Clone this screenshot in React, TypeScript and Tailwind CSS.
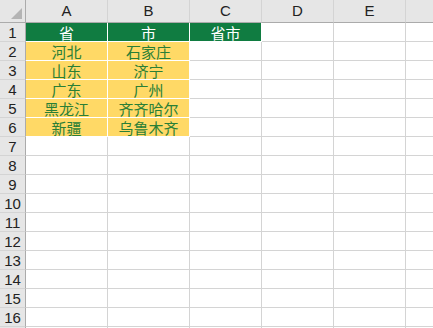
import * as React from 'react';

const cols = [
  { key: 'A', w: 'w-[82px]' },
  { key: 'B', w: 'w-[82px]' },
  { key: 'C', w: 'w-[72px]' },
  { key: 'D', w: 'w-[72px]' },
  { key: 'E', w: 'w-[72px]' },
];

type Cell = { text?: string; fill?: 'green' | 'gold' };

const data: Cell[][] = [
  [{ text: '省', fill: 'green' }, { text: '市', fill: 'green' }, { text: '省市', fill: 'green' }],
  [{ text: '河北', fill: 'gold' }, { text: '石家庄', fill: 'gold' }],
  [{ text: '山东', fill: 'gold' }, { text: '济宁', fill: 'gold' }],
  [{ text: '广东', fill: 'gold' }, { text: '广州', fill: 'gold' }],
  [{ text: '黑龙江', fill: 'gold' }, { text: '齐齐哈尔', fill: 'gold' }],
  [{ text: '新疆', fill: 'gold' }, { text: '乌鲁木齐', fill: 'gold' }],
];

const cjk = { fontFamily: '"Noto Sans CJK SC", "Liberation Sans", sans-serif' };
const latin = { fontFamily: '"Liberation Sans", Arial, sans-serif' };

function DataCell({ cell, w }: { cell?: Cell; w: string }) {
  if (cell?.fill === 'green') {
    return (
      <div className={`${w} h-full shrink-0 bg-[#107c41] border-r border-b border-white text-white text-[15px] leading-none flex items-center justify-center`} style={cjk}>
        {cell.text}
      </div>
    );
  }
  if (cell?.fill === 'gold') {
    return (
      <div className={`${w} h-full shrink-0 bg-[#ffd966] border-r border-b border-white text-[#2a7f36] text-[15px] leading-none flex items-center justify-center`} style={cjk}>
        {cell.text}
      </div>
    );
  }
  return <div className={`${w} h-full shrink-0 border-r border-b border-[#d4d4d4]`} />;
}

export default function App() {
  // row 17 only peeks in at the bottom edge, so it gets no label
  const rows = Array.from({ length: 17 }, (_, i) => i + 1);
  return (
    <div className="w-[433px] h-[328px] overflow-hidden bg-white">
      <div className="flex h-[23px]">
        <div className="w-[26px] h-full shrink-0 bg-[#e6e6e6] border-r border-b border-[#ababab] relative">
          <svg className="absolute left-[11px] top-[8px]" width="12" height="12" viewBox="0 0 12 12">
            <polygon points="11,0 11,11 0,11" fill="#b4b4b4" />
          </svg>
        </div>
        {cols.map((c) => (
          <div key={c.key} className={`${c.w} h-full shrink-0 bg-[#e6e6e6] border-r border-b border-r-[#d4d4d4] border-b-[#ababab] text-[15px] text-[#222] flex items-center justify-center`} style={latin}>
            {c.key}
          </div>
        ))}
        <div className="flex-1 h-full bg-[#e6e6e6] border-b border-[#ababab]" />
      </div>
      {rows.map((r) => (
        <div key={r} className="flex h-[19px]">
          <div className="w-[26px] h-full shrink-0 bg-[#e6e6e6] border-r border-b border-r-[#ababab] border-b-[#d4d4d4] text-[15px] text-[#222] leading-none flex items-center justify-center" style={latin}>
            {r <= 16 ? r : ''}
          </div>
          {cols.map((c, ci) => (
            <DataCell key={c.key} cell={data[r - 1]?.[ci]} w={c.w} />
          ))}
          <div className="flex-1 h-full border-b border-[#d4d4d4]" />
        </div>
      ))}
    </div>
  );
}
